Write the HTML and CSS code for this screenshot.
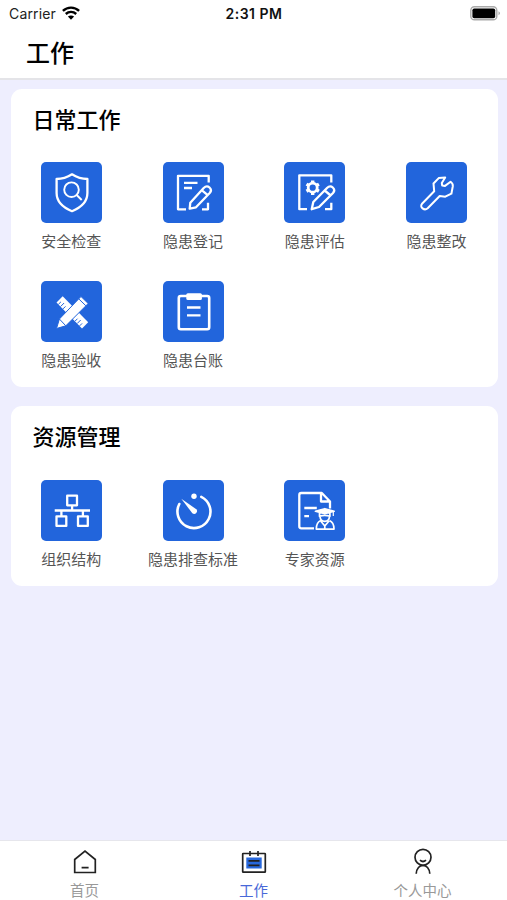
FILE: index.html
```html
<!DOCTYPE html>
<html lang="zh-CN">
<head>
<meta charset="utf-8">
<title>工作</title>
<link rel="stylesheet" href="styles.css">
</head>
<body>
<div class="app">
  <header class="header">
    <div class="status">
      <div class="carrier">Carrier
        <svg width="18" height="14" viewBox="0 0 18 14" fill="none" stroke="#000" stroke-width="2.4"><path d="M.9 4.9C5.5.5 12.5.5 17.1 4.9M3.8 8c3-2.8 7.4-2.8 10.4 0"/><path d="M9 13.7 5.9 10.5c1.7-1.5 4.5-1.5 6.2 0z" fill="#000" stroke="none"/></svg>
      </div>
      <div class="time">2:31 PM</div>
      <div class="battery"><svg width="31" height="15" viewBox="0 0 31 15"><rect x=".8" y=".8" width="26" height="13" rx="3.6" fill="#fff" stroke="#aaa" stroke-width="1.4"/><rect x="2.4" y="2.4" width="22.8" height="9.8" rx="1.8"/><path d="M28.5 5.3q3 2 0 4z" fill="#aaa"/></svg></div>
    </div>
    <h1 class="title">工作</h1>
  </header>
  <main class="content">
    <section class="card daily">
      <h2>日常工作</h2>
      <div class="grid">
        <div class="item"><svg class="tile" viewBox="0 0 61 61"><path d="M31 12.3C26 15.5 21 17 15.6 17v14c0 8.5 6.4 14.5 15.4 18.2C40 45.500 46.400 39.500 46.400 31V17C41 17 36 15.500 31 12.300z"/><g stroke-width="1.900"><circle cx="30.500" cy="27.700" r="7.300"/><path d="m35.700 33 5 5"/></g></svg><span>安全检查</span></div>
        <div class="item"><svg class="tile" viewBox="0 0 61 61"><path d="M45.700 20.500v-6.700H15v33.500h8M39 47.300h6v-6.600M21 20.800h13.500M21 26h8"/><path d="m26.700 46.700.6-6L40.700 26q3-3 5.800-.5t.2 5.500L33 45.300zM38.700 28.200l6 5"/></svg><span>隐患登记</span></div>
        <div class="item"><svg class="tile" viewBox="0 0 61 61"><path d="M47.300 20.500v-7.200H15.300v33.900H23M41 47.200h6.300v-6.500"/><circle cx="28.700" cy="25.700" r="4.500" stroke-width="2.800"/><path d="M28.700 18.500v2M28.700 31v2M22.500 22.100l1.700 1M33.200 28.300l1.700 1M22.500 29.300l1.700-1M33.200 23.100l1.700-1" stroke-width="3.400"/><path d="m27.700 47.200 1.600-7.200L43 26q3-3 5.800-.5t.2 5.500L35 45zM40.700 28.500l6 5"/></svg><span>隐患评估</span></div>
        <div class="item"><svg class="tile" viewBox="0 0 61 61"><path stroke-width="2" d="m16 41.800 12.200-12.500-.7-7.800 5.200-5.400 6.500-.6-3.400 5.500.4 2.500 2.800.4 5.600-4.200c1.700 1.200 2.400 2.800 2.200 4.500l-1.400 7.500-6.100 3-5.600-.7-12 12.200c-3.300 3-8.500-1-5.700-4.400z"/></svg><span>隐患整改</span></div>
        <div class="item"><svg class="tile" viewBox="0 0 61 61"><g fill="#fff" stroke="none"><path d="m21.700 15.200-6.200 6.200 25.500 26 6.200-6.200z"/><path d="m40 15.500 7.200 7L24.800 44.800l-9.300 2.700 2.900-9.500z" stroke="#2265dc" stroke-width="1"/></g><path stroke="#2265dc" stroke-width="1" d="m17.400 23.300 2.500-2.400M19.600 25.500l3.500-3.500M22 27.900l2.500-2.500M34 40.200l2.500-2.500M36.200 42.500l3.500-3.500M38.600 44.900l2.500-2.500M37.700 17.800l7.200 7M18.400 38l6.400 6.800"/></svg><span>隐患验收</span></div>
        <div class="item"><svg class="tile" viewBox="0 0 61 61"><rect x="15.800" y="15" width="30.400" height="33.200" rx="2" stroke-width="2.600"/><rect x="23.300" y="12.300" width="15.600" height="6.800" rx="1.500" fill="#fff" stroke="none"/><path d="M24 26.500h13.500M24 34.300h13.500"/></svg><span>隐患台账</span></div>
      </div>
    </section>
    <section class="card resources">
      <h2>资源管理</h2>
      <div class="grid">
        <div class="item"><svg class="tile" viewBox="0 0 61 61"><path d="M26.200 15.700h9.800v9.600h-9.800zM15.500 36.300h9.800v9.600h-9.800zM37 36.300h9.800v9.600H37zM13.700 30.500H49M31.100 25.300v5M20.400 30.500v6M41.900 30.500v6"/></svg><span>组织结构</span></div>
        <div class="item"><svg class="tile" viewBox="0 0 61 61"><path d="M38.300 16.800A16.500 16.500 0 1 1 16.300 24" stroke-width="2.600" stroke-linecap="round"/><g fill="#fff" stroke="none"><circle cx="31" cy="16.300" r="2.700"/><path d="m18.300 18.700 15 10.500c2.500 2.600-1.300 6.400-4 4z"/></g></svg><span>隐患排查标准</span></div>
        <div class="item"><svg class="tile" viewBox="0 0 61 61"><path d="M30 48.300H17.300q-2 0-2-2V15q0-2 2-2h20.500l8.200 8.500v7M37 13.500v8h8.500M20.300 28h12.500M20.300 36.200H25"/><path d="m31.500 31.300 9.300-2.600 9.300 2.600-9.300 2.500z" fill="#fff" stroke="none"/><g stroke-width="1.700"><path d="m31.500 31.300 9.300-2.600 9.300 2.600-9.300 2.500zM35.500 32.800v3.500q5.200-2 10.400 0v-3.500M36 36.500c.5 6.500 9 6.500 9.500 0M36.700 40.500c-3 1.300-4.400 3.600-4.400 8.600H50c0-5-1.500-7.300-4.500-8.600M36.700 41l4.100 5 4.200-5M40.800 44.500V49"/></g><path d="M49.300 32v4" stroke-width="1.200"/></svg><span>专家资源</span></div>
      </div>
    </section>
  </main>
  <nav class="tabs">
    <div class="tab"><svg width="24" height="24" viewBox="0 0 24 24"><path d="M1.700 22.500V9.500L12 1l10.300 8.500v13zM8.600 17.700h7"/></svg><span>首页</span></div>
    <div class="tab active"><svg width="26" height="24" viewBox="0 0 26 24"><rect x="1.700" y="3.500" width="22.600" height="18.700" rx=".5"/><path d="M9 1v5M17 1v5"/><path d="M5.300 7.500h15.400v11H5.300z" fill="#2868dc" stroke="none"/><path d="M7.500 10.800h11M7.500 15.300h11"/></svg><span>工作</span></div>
    <div class="tab"><svg width="24" height="26" viewBox="0 0 24 26"><circle cx="12" cy="8.300" r="8"/><path d="M5.200 24.800c.5-11.300 13.100-11.300 13.600 0M9 11.200q3 2.600 6 0"/></svg><span>个人中心</span></div>
  </nav>
</div>
</body>
</html>
```
FILE: styles.css
```css
* { box-sizing: border-box; }
body { margin: 0; font-family: "Noto Sans CJK SC", sans-serif; background: #eeeefe; }
.app { height: 900px; display: flex; flex-direction: column; }
svg { display: block; fill: none; overflow: visible; }
.header { height: 80px; background: #fff; border-bottom: 2px solid #e4e4e8; }
.status { height: 26px; padding: 0 6px 0 9px; display: grid; grid-template-columns: 1fr auto 1fr; align-items: center; font-family: Inter, sans-serif; font-size: 14px; color: #222; }
.carrier { display: flex; align-items: center; gap: 6px; letter-spacing: .15px; }
.time { font-weight: 600; color: #111; letter-spacing: .5px; margin-right: 2px; }
.battery { justify-self: end; }
.battery rect:nth-child(2) { fill: #000; }
.title { margin: 8px 0 0 26px; font-size: 24px; line-height: 36px; font-weight: 500; color: #000; }
.content { flex: 1; padding: 8.500px 9.500px 0 10.500px; }
.card { background: #fff; border-radius: 11px; padding-top: 12px; }
.daily { height: 298.500px; margin-bottom: 19px; }
.resources { height: 180px; }
.card h2 { margin: 0 0 0 22px; font-size: 22px; line-height: 34px; font-weight: 500; color: #000; }
.grid { display: grid; grid-template-columns: repeat(4, 1fr); grid-auto-rows: 118.500px; margin-top: 27.500px; }
.item { display: flex; flex-direction: column; align-items: center; color: #555; font-size: 15px; line-height: 22px; white-space: nowrap; }
.tile { width: 61px; height: 61px; border-radius: 5px; background: #2265dc; margin-bottom: 7px; stroke: #fff; stroke-width: 2.300; stroke-linejoin: round; }
.tabs { height: 60px; background: #fff; border-top: 1px solid #e6e6ec; display: grid; grid-template-columns: repeat(3, 1fr); }
.tab { display: flex; flex-direction: column; align-items: center; padding-top: 8px; font-size: 14.500px; line-height: 20px; color: #999; }
.tab svg { height: 26px; margin-bottom: 5px; stroke: #222; stroke-width: 1.700; }
.tab.active { color: #4868d8; }
```
